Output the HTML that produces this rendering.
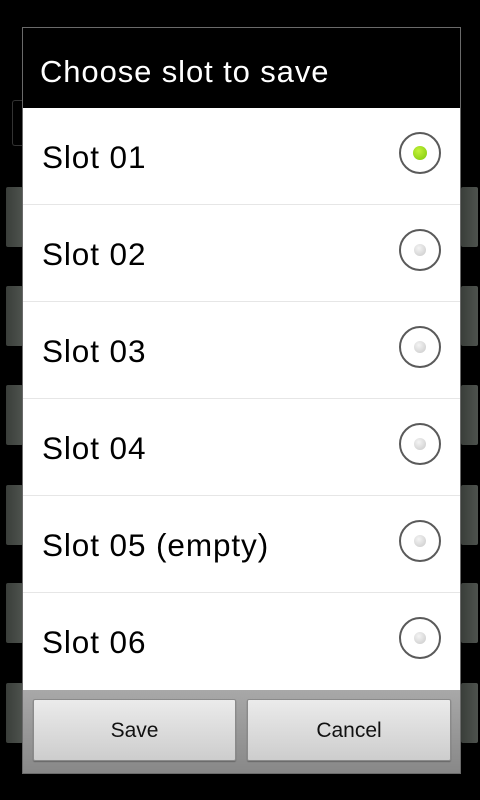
<!DOCTYPE html>
<html><head><style>
body{margin:0;width:480px;height:800px;background:#000;position:relative;overflow:hidden;font-family:"Liberation Sans",sans-serif}
.blk{position:absolute;width:17px;height:60px;background:linear-gradient(90deg,#3a3e3a,#4e534e);border-radius:2px}
.dlg{position:absolute;left:22px;top:27px;width:437px;height:745px;border:1px solid #6a6a6a;background:#000}
.title{position:absolute;left:0;top:4px;width:437px;height:79px;color:#fff;font-size:31px;letter-spacing:0.9px;line-height:79px;padding-left:17px;box-sizing:border-box}
.list{position:absolute;left:0;top:80px;width:437px;height:582px;background:#fff}
.row{position:absolute;left:0;width:437px;height:97px;border-bottom:1px solid #e6e6e6;box-sizing:border-box}
.row span{position:absolute;left:19px;top:31px;font-size:31.5px;letter-spacing:0.9px;color:#000}
.radio{position:absolute;left:376px;top:24px;width:38px;height:38px;border:2px solid #5a5a5a;border-radius:50%;background:#fff}
.radio i{position:absolute;left:13px;top:13px;width:12px;height:12px;border-radius:50%;background:radial-gradient(circle at 40% 35%,#f4f4f4,#c8c8c8)}
.radio.on i{left:12px;top:12px;width:14px;height:14px;background:radial-gradient(circle at 40% 35%,#c4f23a,#7cc80a)}
.btns{position:absolute;left:0;top:662px;width:437px;height:83px;background:linear-gradient(#a8a8a8,#888)}
.btn{position:absolute;top:9px;height:60px;background:linear-gradient(#ebebeb,#cdcdcd);border:1px solid #8a8a8a;border-radius:2px;font-size:21px;color:#111;text-align:center;line-height:62px;box-shadow:0 1px 1px #666}
</style></head><body>
<div class="blk" style="left:6px;top:187px"></div>
<div class="blk" style="left:6px;top:286px"></div>
<div class="blk" style="left:6px;top:385px"></div>
<div class="blk" style="left:6px;top:485px"></div>
<div class="blk" style="left:6px;top:583px"></div>
<div class="blk" style="left:6px;top:683px"></div>
<div class="blk" style="left:461px;top:187px"></div>
<div class="blk" style="left:461px;top:286px"></div>
<div class="blk" style="left:461px;top:385px"></div>
<div class="blk" style="left:461px;top:485px"></div>
<div class="blk" style="left:461px;top:583px"></div>
<div class="blk" style="left:461px;top:683px"></div>
<div style="position:absolute;left:12px;top:100px;width:10px;height:44px;border:1px solid #333;border-right:none;border-radius:3px 0 0 3px"></div>
<div class="dlg">
<div class="title">Choose slot to save</div>
<div class="list">
<div class="row" style="top:0"><span>Slot 01</span><div class="radio on"><i></i></div></div>
<div class="row" style="top:97px"><span>Slot 02</span><div class="radio"><i></i></div></div>
<div class="row" style="top:194px"><span>Slot 03</span><div class="radio"><i></i></div></div>
<div class="row" style="top:291px"><span>Slot 04</span><div class="radio"><i></i></div></div>
<div class="row" style="top:388px"><span>Slot 05 (empty)</span><div class="radio"><i></i></div></div>
<div class="row" style="top:485px;border:none"><span>Slot 06</span><div class="radio"><i></i></div></div>
</div>
<div class="btns">
<div class="btn" style="left:10px;width:201px">Save</div>
<div class="btn" style="left:224px;width:202px">Cancel</div>
</div>
</div>
</body></html>
